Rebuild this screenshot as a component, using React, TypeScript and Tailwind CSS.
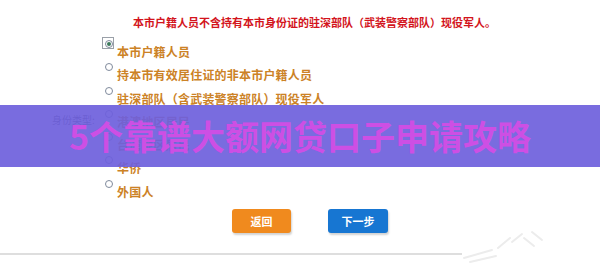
import React from "react";

const options = [
  "本市户籍人员",
  "持本市有效居住证的非本市户籍人员",
  "驻深部队（含武装警察部队）现役军人",
  "港澳地区居民",
  "台湾地区居民",
  "华侨",
  "外国人",
];

const cjk = { fontFamily: '"Noto Sans CJK SC", "Noto Sans", sans-serif' };

export default function App() {
  return (
    <div className="relative h-[274px] w-[600px] overflow-hidden bg-white" style={cjk}>
      <div className="pl-[133px] pt-[15px] text-[11px] font-bold leading-[14px] text-[#d3141c]">
        本市户籍人员不含持有本市身份证的驻深部队（武装警察部队）现役军人。
      </div>

      <div className="mt-[9px] flex items-center">
        <div className="w-[102px] pl-[52px] text-[10px] text-[#555]">身份类型:</div>
        <div className="flex flex-col">
          {options.map((o, i) => (
            <div key={o} className="flex h-[23.3px] items-start">
              <div className="relative h-[12px] w-[15px]">
                {i === 0 && (
                  <span className="absolute left-0 top-[-1px] h-[12px] w-[12px] border border-[#9aa0a8]" />
                )}
                <span className="absolute left-[3px] top-[2px] flex h-[8px] w-[8px] items-center justify-center rounded-full border border-[#7f8a9c] bg-white">
                  {i === 0 && <span className="h-[4px] w-[4px] rounded-full bg-[#3d7a5c]" />}
                </span>
              </div>
              <span className="mt-[6px] text-[12px] font-bold leading-[16px] tracking-[0.2px] text-[#cc8226]">
                {o}
              </span>
            </div>
          ))}
        </div>
      </div>

      <div className="mt-[8px] flex gap-[37px] pl-[232px]">
        <button className="h-[24px] w-[59px] rounded-[3px] bg-[#f08a1e] text-[11px] font-semibold text-white shadow-[1px_2px_2px_rgba(0,0,0,0.18)]">
          返回
        </button>
        <button className="h-[24px] w-[60px] rounded-[3px] bg-[#1776d2] text-[11px] font-semibold text-white shadow-[1px_2px_2px_rgba(0,0,0,0.18)]">
          下一步
        </button>
      </div>

      <div className="mt-[20px] flex items-center">
        <div className="h-[2px] w-[462px] bg-[#dedede]" />
      </div>

      <svg className="absolute left-[462px] top-[228px]" width="100" height="40" viewBox="0 0 100 40">
        <g stroke="#ececec" strokeWidth="2" fill="none" strokeLinecap="round">
          <path d="M2 30 L30 22" />
          <path d="M8 34 L34 28" />
          <path d="M36 20 L48 10" />
          <path d="M50 14 L60 6" />
          <path d="M62 10 L72 18" />
          <path d="M70 4 L80 12" />
        </g>
      </svg>

      <div className="absolute left-0 top-[105px] flex h-[62px] w-full items-center justify-center bg-[#6e60dc]/[0.92]">
        <span className="text-[34px] font-bold leading-none text-[#cd4fe4]">5个靠谱大额网贷口子申请攻略</span>
      </div>
    </div>
  );
}
